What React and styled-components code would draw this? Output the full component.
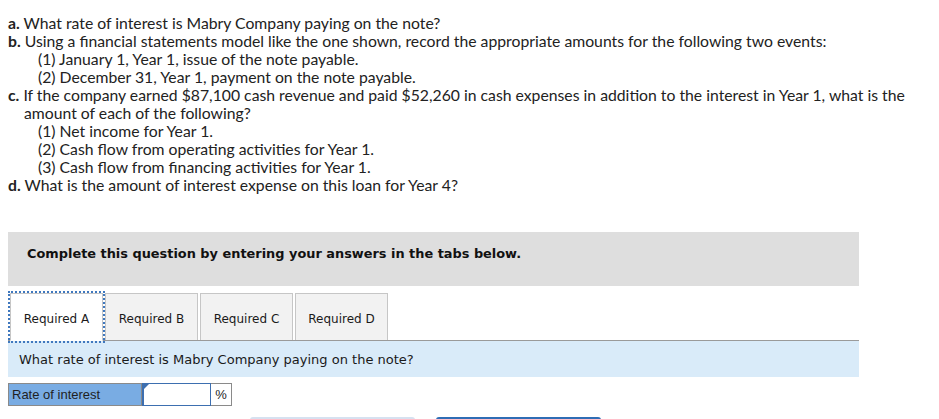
import React from "react";
import styled, { createGlobalStyle } from "styled-components";

const Global = createGlobalStyle`
  html, body { margin: 0; padding: 0; background: #ffffff; overflow: hidden; }
  body { font-family: "Lato", "Liberation Sans", sans-serif; }
`;

const Page = styled.div`
  padding: 14px 0 0 8px;
`;

const Questions = styled.div`
  font-family: "Lato", "Liberation Sans", sans-serif;
  font-size: 15.75px;
  line-height: 18px;
  color: #222222;
  white-space: nowrap;
`;

const Item = styled.div`
  padding-left: 16px;
  text-indent: -16px;
`;

const Label = styled.b`
  font-weight: 700;
`;

const Sub = styled.div`
  padding-left: 30px;
`;

const Panel = styled.div`
  width: 851px;
`;

const Instruction = styled.div`
  box-sizing: border-box;
  margin-top: 38px;
  height: 54px;
  background: #dedede;
  padding: 14px 0 0 19px;
  line-height: 16px;
  font-family: "DejaVu Sans", Verdana, sans-serif;
  font-weight: 700;
  font-size: 12.9px;
  color: #111111;
`;

const TabList = styled.div`
  margin-top: 7px;
  display: flex;
  align-items: flex-end;
  gap: 2px;
  padding-left: 2px;
  border-bottom: 1px solid #9a9a9a;
`;

const Tab = styled.button`
  box-sizing: border-box;
  width: 93px;
  height: ${(p) => (p.$active ? 48 : 47)}px;
  margin-bottom: ${(p) => (p.$active ? -1 : 0)}px;
  border: 1px solid #c6c6c6;
  border-bottom: ${(p) => (p.$active ? "1px solid #ffffff" : "none")};
  background: ${(p) => (p.$active ? "#ffffff" : "#f2f2f2")};
  outline: ${(p) => (p.$active ? "2px dotted #3f78be" : "none")};
  outline-offset: 0;
  font-family: "DejaVu Sans", Verdana, sans-serif;
  font-size: 12px;
  color: #1a1a1a;
  padding: 3px 0 0;
  position: relative;
  z-index: ${(p) => (p.$active ? 1 : 0)};
`;

const Prompt = styled.div`
  height: 36px;
  background: #d9ebf9;
  display: flex;
  align-items: center;
  padding-left: 11px;
  font-family: "DejaVu Sans", Verdana, sans-serif;
  font-size: 13px;
  color: #1a1a1a;
`;

const AnswerRow = styled.div`
  margin-top: 6px;
  display: flex;
  height: 23px;
`;

const RowLabel = styled.div`
  box-sizing: border-box;
  width: 134px;
  border: 1px solid #8a8a8a;
  background: #79ace3;
  display: flex;
  align-items: center;
  padding-left: 3px;
  font-family: "Liberation Sans", Arial, sans-serif;
  font-size: 13px;
  color: #1f1f1f;
`;

const InputWrap = styled.div`
  position: relative;
  box-sizing: border-box;
  width: 69px;
  border: 1px solid #3d6fb0;
  border-left-width: 2px;
  background: #ffffff;
`;

const Corner = styled.span`
  position: absolute;
  left: 0;
  top: 0;
  width: 0;
  height: 0;
  border-top: 5px solid #3d6fb0;
  border-right: 5px solid transparent;
`;

const Input = styled.input`
  box-sizing: border-box;
  width: 100%;
  height: 100%;
  border: none;
  outline: none;
  background: transparent;
  font-family: "Liberation Sans", Arial, sans-serif;
  font-size: 13px;
  padding: 0 3px;
`;

const Unit = styled.div`
  box-sizing: border-box;
  width: 21px;
  border: 1px solid #8a8a8a;
  border-left: none;
  display: flex;
  align-items: center;
  justify-content: center;
  font-family: "Liberation Sans", Arial, sans-serif;
  font-size: 13px;
  color: #1f1f1f;
`;

const NavRow = styled.div`
  margin-top: 11px;
  display: flex;
  gap: 21px;
  padding-left: 242px;
`;

const NavButton = styled.button`
  width: 165px;
  height: 40px;
  border: none;
  border-radius: 3px;
  background: ${(p) => (p.$primary ? "#2f6db5" : "#d6e1f0")};
`;

export default function App() {
  return (
    <>
      <Global />
      <Page>
        <Questions>
          <Item>
            <Label>a.</Label> What rate of interest is Mabry Company paying on the note?
          </Item>
          <Item>
            <Label>b.</Label> Using a financial statements model like the one shown, record the appropriate amounts for the following two events:
          </Item>
          <Sub>(1) January 1, Year 1, issue of the note payable.</Sub>
          <Sub>(2) December 31, Year 1, payment on the note payable.</Sub>
          <Item>
            <Label>c.</Label> If the company earned $87,100 cash revenue and paid $52,260 in cash expenses in addition to the interest in Year 1, what is the
            <br />
            amount of each of the following?
          </Item>
          <Sub>(1) Net income for Year 1.</Sub>
          <Sub>(2) Cash flow from operating activities for Year 1.</Sub>
          <Sub>(3) Cash flow from financing activities for Year 1.</Sub>
          <Item>
            <Label>d.</Label> What is the amount of interest expense on this loan for Year 4?
          </Item>
        </Questions>

        <Panel>
          <Instruction>Complete this question by entering your answers in the tabs below.</Instruction>

          <TabList>
            <Tab $active>Required A</Tab>
            <Tab>Required B</Tab>
            <Tab>Required C</Tab>
            <Tab>Required D</Tab>
          </TabList>

          <Prompt>What rate of interest is Mabry Company paying on the note?</Prompt>

          <AnswerRow>
            <RowLabel>Rate of interest</RowLabel>
            <InputWrap>
              <Corner />
              <Input type="text" aria-label="Rate of interest" />
            </InputWrap>
            <Unit>%</Unit>
          </AnswerRow>

          <NavRow>
            <NavButton disabled aria-label="Previous: Required A" />
            <NavButton $primary aria-label="Next: Required B" />
          </NavRow>
        </Panel>
      </Page>
    </>
  );
}
